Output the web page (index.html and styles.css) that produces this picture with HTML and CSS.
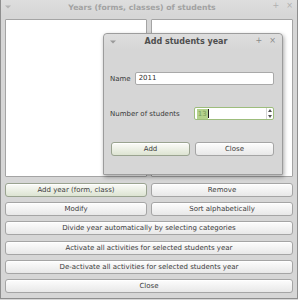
FILE: index.html
```html
<!DOCTYPE html>
<html lang="en">
<head>
    <meta charset="UTF-8">
    <title>Years (forms, classes) of students</title>
    <link rel="stylesheet" href="styles.css">
</head>
<body>
    <div class="window">
        <div class="titlebar">
            <svg class="menu-arrow" width="6" height="4" viewBox="0 0 6 4"><path d="M0 0.5h6L3 3.5z" fill="#b4b4b4"/></svg>
            <span class="title inactive">Years (forms, classes) of students</span>
            <span class="controls inactive-ctl"><span>+</span><span>×</span></span>
        </div>
        <div class="content">
            <div class="lists">
                <div class="list"></div>
                <div class="list"></div>
            </div>
            <div class="actions">
                <div class="row">
                    <button class="btn default">Add year (form, class)</button>
                    <button class="btn">Remove</button>
                </div>
                <div class="row">
                    <button class="btn">Modify</button>
                    <button class="btn">Sort alphabetically</button>
                </div>
                <button class="btn">Divide year automatically by selecting categories</button>
                <button class="btn">Activate all activities for selected students year</button>
                <button class="btn">De-activate all activities for selected students year</button>
                <button class="btn">Close</button>
            </div>
        </div>

        <!-- modal dialog floating over the main window -->
        <div class="dialog">
            <div class="titlebar dlg-titlebar">
                <svg class="menu-arrow" width="6" height="4" viewBox="0 0 6 4"><path d="M0 0.5h6L3 3.5z" fill="#9a9a9a"/></svg>
                <span class="title">Add students year</span>
                <span class="controls"><span>+</span><span>×</span></span>
            </div>
            <div class="dlg-body">
                <div class="field-row name-row">
                    <label for="yearName">Name</label>
                    <div class="text-input" id="yearName">2011</div>
                </div>
                <div class="field-row number-row">
                    <label for="numStudents">Number of students</label>
                    <div class="spin" id="numStudents">
                        <div class="spin-text"><span class="sel">13</span><span class="caret"></span></div>
                        <div class="spin-arrows">
                            <svg width="4" height="3" viewBox="0 0 4 3"><path d="M0 3L2 0l2 3z" fill="#555"/></svg>
                            <svg width="4" height="3" viewBox="0 0 4 3"><path d="M0 0h4L2 3z" fill="#555"/></svg>
                        </div>
                    </div>
                </div>
                <div class="dlg-buttons">
                    <button class="btn default">Add</button>
                    <button class="btn">Close</button>
                </div>
            </div>
        </div>
    </div>
</body>
</html>
```

FILE: styles.css
```css
body { margin: 0; font-family: "DejaVu Sans", sans-serif; font-size: 7px; color: #3a3a3a; background: #d6d6d6; }
.window { position: relative; box-sizing: border-box; width: 298px; height: 299px; background: #d6d6d6; border: 1px solid #8e8e8e; border-top: none; }

.titlebar { position: relative; height: 15px; padding-right: 14px; display: flex; align-items: center; justify-content: center; background: linear-gradient(#dedede, #d6d6d6); }
.menu-arrow { position: absolute; left: 4px; top: 5px; }
.title { font-weight: bold; font-size: 7.7px; color: #4f4f4f; }
.title.inactive { color: #a2a2a2; }
.controls { position: absolute; right: 4px; top: 1px; display: flex; gap: 7px; font-size: 8px; color: #8a8a8a; }
.inactive-ctl { color: #b0b0b0; }

.content { padding: 4px 4px 0 4px; }
.lists { display: flex; gap: 4px; height: 158px; }
.list { flex: 1; background: #fff; border: 1px solid #a4a4a4; border-radius: 1px; }

.actions { display: flex; flex-direction: column; gap: 5.2px; margin-top: 6px; }
.row { display: flex; gap: 4px; }
.row .btn { flex: 1; }

.btn { box-sizing: border-box; height: 14px; padding: 0; font-family: "DejaVu Sans", sans-serif; font-size: 7px; color: #3c3c3c; background: linear-gradient(#fdfdfd, #e8e8e8); border: 1px solid #a5a5a5; border-radius: 3px; box-shadow: inset 0 1px 0 #fff; }
.btn.default { background: linear-gradient(#fbfbf8, #dde4d2); border-color: #9aa390; }

.dialog { position: absolute; left: 102px; top: 33px; box-sizing: border-box; width: 180px; height: 142px; background: #d6d6d6; border: 1px solid #9c9c9c; border-radius: 4px 4px 1px 1px; box-shadow: 1px 2px 4px rgba(0, 0, 0, 0.35); }
.dlg-titlebar { height: 15px; border-radius: 4px 4px 0 0; }
.dlg-titlebar .title { font-size: 8px; }
.dlg-titlebar .menu-arrow { left: 6px; top: 6px; }
.dlg-titlebar .controls { right: 6px; top: 2px; }

.dlg-body { padding: 23px 8px 0 6px; }
.field-row { display: flex; align-items: center; }
.name-row { gap: 4px; }
.number-row { margin-top: 22px; gap: 14px; }
.text-input { flex: 1; box-sizing: border-box; height: 13px; line-height: 11px; padding-left: 3px; background: #fff; border: 1px solid #a9a9a9; border-radius: 2px; color: #303030; }

.spin { flex: 1; box-sizing: border-box; height: 13px; display: flex; background: #fff; border: 1px solid #9dbd7c; border-radius: 2px; }
.spin-text { flex: 1; display: flex; align-items: center; padding-left: 2px; }
.sel { background: #b3d28d; color: #7a9a58; line-height: 10px; padding: 0 1px; }
.caret { width: 1px; height: 9px; background: #222; }
.spin-arrows { width: 6px; display: flex; flex-direction: column; justify-content: space-around; align-items: center; border-left: 1px solid #d4d4d4; }

.dlg-buttons { display: flex; gap: 5px; margin-top: 22px; margin-left: 1px; }
.dlg-buttons .btn { flex: 1; }
```
